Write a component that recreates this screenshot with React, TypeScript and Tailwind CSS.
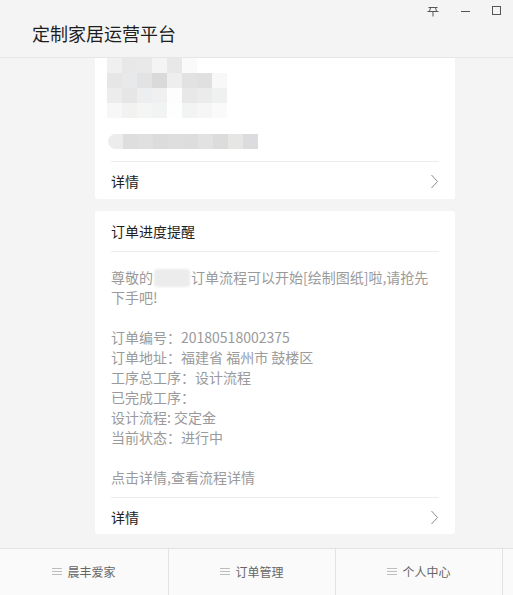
import React from 'react';

const mosaic: string[][] = [
  ['#f0f0f0', '#e8e8e8', '#e9e9e9', '#f4f4f4', '#e8e8e8', '#fafafa', '#ffffff', '#ffffff'],
  ['#e6e6e6', '#e8e9ea', '#e3e3e3', '#dadada', '#eeeeee', '#e2e2e2', '#e0e0e0', '#f8f8f8'],
  ['#ececec', '#e6e6e6', '#eceef0', '#f0f0f0', '#fdfdfd', '#e8e8e8', '#ebebeb', '#eff0f0'],
  ['#f7f7f7', '#f2f2f0', '#f4f6f6', '#f2f4f4', '#fefefe', '#f2f4f4', '#f6f6f6', '#fafafa'],
];

const bar = ['#ececec', '#dedede', '#e0e0e0', '#dcdcdc', '#dedede', '#dcdddc', '#e2e2e2', '#dcdcdc', '#e6e6e4', '#dcdcde'];

const lines = [
  '订单编号：20180518002375',
  '订单地址：福建省 福州市 鼓楼区',
  '工序总工序：设计流程',
  '已完成工序：',
  '设计流程: 交定金',
  '当前状态：进行中',
];

const tabs = ['晨丰爱家', '订单管理', '个人中心'];

function Chevron() {
  return (
    <svg width="9" height="15" viewBox="0 0 9 15" fill="none">
      <polyline points="1.5,1 7.5,7.5 1.5,14" stroke="#8a8a8a" strokeWidth="1" />
    </svg>
  );
}

function DetailRow() {
  return (
    <div className="h-[37px] flex items-center justify-between border-t border-[#ececec] pt-[2px]">
      <span className="text-[14px] leading-5 text-[#222]">详情</span>
      <Chevron />
    </div>
  );
}

function MenuIcon() {
  return (
    <svg width="10" height="9" viewBox="0 0 10 9" fill="none">
      <path d="M0 1.5H10M0 4.5H10M0 7.5H10" stroke="#bdbdbd" strokeWidth="1" />
    </svg>
  );
}

export default function App() {
  return (
    <div className="w-[513px] h-[595px] bg-[#f4f4f4] flex flex-col overflow-hidden font-['Noto_Sans_CJK_SC','Noto_Sans',sans-serif]">
      {/* Header */}
      <div className="relative h-[58px] shrink-0 border-b border-[#e6e6e6] bg-[#f4f4f4] pl-[32px] pt-[21px]">
        <h1 className="text-[18px] leading-6 text-[#1e1e1e]">定制家居运营平台</h1>
        <div className="absolute top-[5px] right-[11px] flex items-center gap-[22px]">
          <svg width="12" height="11" viewBox="0 0 12 11" fill="none" className="mt-[1px]">
            <path d="M1.5 1.5H10.5M3.5 1.5L2.5 5.5M8.5 1.5L9.5 5.5M0.5 5.5H11.5M6 5.5V10.5" stroke="#555" strokeWidth="1" />
          </svg>
          <svg width="9" height="9" viewBox="0 0 9 9" fill="none">
            <path d="M0 4.5H9" stroke="#555" strokeWidth="1" />
          </svg>
          <svg width="10" height="10" viewBox="0 0 10 10" fill="none">
            <rect x="0.5" y="0.5" width="8" height="8" stroke="#555" strokeWidth="1" />
          </svg>
        </div>
      </div>

      {/* Content */}
      <div className="flex-1 overflow-hidden flex flex-col gap-[12px]">
        <div className="ml-[95px] w-[360px] bg-white rounded-b-[3px] shrink-0 pb-[1px]">
          <div className="pl-[12px] flex flex-col">
            {mosaic.map((row, r) => (
              <div key={r} className="flex">
                {row.map((c, i) => (
                  <div key={i} className="w-[15px] h-[15px]" style={{ backgroundColor: c }} />
                ))}
              </div>
            ))}
            <div className="flex mt-[16px] ml-[1px]">
              {bar.map((c, i) => (
                <div
                  key={i}
                  className={`w-[15px] h-[15px] ${i === 0 ? 'rounded-l-full' : ''}`}
                  style={{ backgroundColor: c }}
                />
              ))}
            </div>
          </div>
          <div className="px-[16px] mt-[12px]">
            <DetailRow />
          </div>
        </div>

        <div className="ml-[95px] w-[360px] bg-white rounded-[3px] px-[16px] shrink-0">
          <div className="h-[41px] flex items-center border-b border-[#ececec] pb-[1px]">
            <span className="text-[14px] leading-5 text-[#1e1e1e]">订单进度提醒</span>
          </div>
          <div className="pt-[15px] pb-[10px] text-[14px] leading-5 text-[#9a9a9a]">
            <p>
              尊敬的<span className="inline-block w-[36px] h-[18px] mx-[1px] align-[-4px] bg-[#ececec] rounded-[3px] blur-[1px]" />订单流程可以开始[绘制图纸]啦,请抢先下手吧!
            </p>
            <div className="h-5" />
            {lines.map(l => (
              <p key={l}>{l}</p>
            ))}
            <div className="h-5" />
            <p>点击详情,查看流程详情</p>
          </div>
          <DetailRow />
        </div>
      </div>

      {/* Bottom nav */}
      <div className="h-[47px] shrink-0 border-t border-[#e2e2e2] bg-[#fafafa] flex">
        {tabs.map((t, i) => (
          <div
            key={t}
            className={`${i === 0 ? 'w-[169px]' : 'w-[167px]'} border-r border-[#e2e2e2] flex items-center justify-center gap-[5px] pb-[1px]`}
          >
            <MenuIcon />
            <span className="text-[12px] leading-4 text-[#666]">{t}</span>
          </div>
        ))}
      </div>
    </div>
  );
}
